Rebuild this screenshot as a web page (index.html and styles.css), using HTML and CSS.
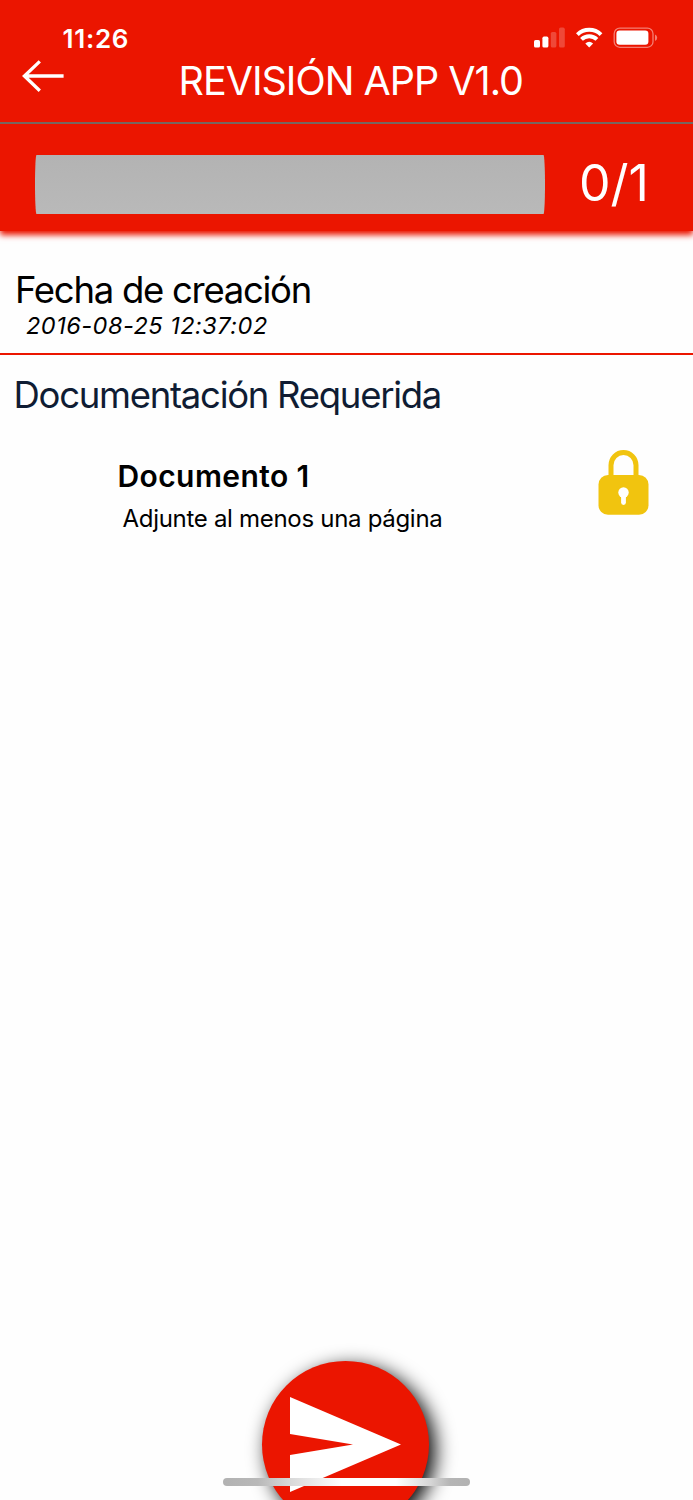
FILE: index.html
```html
<!DOCTYPE html>
<html lang="es">
<head>
    <meta charset="utf-8">
    <title>Revisión App</title>
    <link rel="stylesheet" href="styles.css">
</head>
<body>
    <div class="screen">
        <header class="header">
            <div class="status">
                <span class="time">11:26</span>
                <svg class="status-icons" width="124" height="22" viewBox="0 0 124 22" fill="#fff">
                    <rect x="0" y="13" width="6" height="7.6" rx="1.6"/>
                    <rect x="8.4" y="9.6" width="6" height="11" rx="1.6"/>
                    <rect x="16.8" y="5" width="5.6" height="15.6" rx="1.6" opacity=".22"/>
                    <rect x="25" y="0.6" width="5.8" height="20" rx="1.6" opacity=".22"/>
                    <g fill="none" stroke="#fff" stroke-width="4">
                        <path d="M43.4 7.6A17 17 0 0 1 67 7.6"/>
                        <path d="M47.5 12.4A11 11 0 0 1 62.9 12.4"/>
                    </g>
                    <path d="M51.3 16.4A6 6 0 0 1 59.1 16.4L55.2 20.4Z"/>
                    <rect x="80.2" y="1.1" width="38.8" height="19.2" rx="5.6" fill="none" stroke="#fff" stroke-width="1.3" opacity=".45"/>
                    <rect x="82.4" y="3.6" width="32" height="14.2" rx="3.2"/>
                    <path d="M121 7.4Q123.2 8.4 123.2 10.7T121 14Z" opacity=".45"/>
                </svg>
            </div>
            <div class="navbar">
                <svg class="back" width="44" height="34" viewBox="0 0 44 34" fill="none" stroke="#fff" stroke-width="3.3">
                    <path d="M18.8 2.4L3.4 17L18.8 31.8M2.8 17H42.6"/>
                </svg>
                <h1>REVISIÓN APP V1.0</h1>
            </div>
            <div class="progress">
                <div class="bar"></div>
                <span class="count">0/1</span>
            </div>
        </header>

        <section class="created">
            <h2>Fecha de creación</h2>
            <p class="date">2016-08-25 12:37:02</p>
        </section>

        <section class="required">
            <h2>Documentación Requerida</h2>
            <div class="document">
                <div class="document-text">
                    <h3>Documento 1</h3>
                    <p>Adjunte al menos una página</p>
                </div>
                <svg class="lock" width="51" height="65" viewBox="-0.5 0 51 65">
                    <path d="M12.5 28V15.2a12.5 12.7 0 0 1 25 0V28" fill="none" stroke="#f1c40f" stroke-width="5"/>
                    <rect x="0" y="25" width="50" height="39.7" rx="9.5" fill="#f1c40f"/>
                    <circle cx="25" cy="42.5" r="5.2" fill="#fff"/>
                    <path d="M25 44V52.5" stroke="#fff" stroke-width="4.8" stroke-linecap="round"/>
                </svg>
            </div>
        </section>

        <button class="send" aria-label="Enviar">
            <svg width="111" height="96" viewBox="0 0 111 96" fill="#fff">
                <path d="M0 0L111 47.5L0 95V58L63 47.5L0 37Z"/>
            </svg>
        </button>
        <div class="home-indicator"></div>
    </div>
</body>
</html>
```
FILE: styles.css
```css
* {
    box-sizing: border-box;
}
body {
    margin: 0;
    font-family: Inter, "Liberation Sans", sans-serif;
    background-color: #fefefe;
    color: #000;
}
h1, h2, h3, p {
    margin: 0;
    font-weight: 400;
    white-space: nowrap;
}
.screen {
    position: relative;
    height: 1500px;
    overflow: hidden;
}
.header {
    height: 231px;
    background-color: #eb1500;
    color: #fff;
    box-shadow: 0 4px 6px #eb1500;
}
.status {
    display: flex;
    justify-content: space-between;
    height: 58px;
    padding: 27px 35.5px 0 62.5px;
}
.time {
    font-size: 26px;
    font-weight: 600;
    letter-spacing: 0.7px;
    line-height: 23px;
}
.navbar {
    display: flex;
    height: 66px;
    padding-left: 21px;
    border-bottom: 2px solid #77665f;
}
.back {
    margin-top: 1px;
}
h1 {
    margin-left: 113.5px;
    font-size: 39.5px;
    letter-spacing: -1px;
    line-height: 47px;
}
.progress {
    display: flex;
    padding: 31px 0 0 35px;
}
.bar {
    width: 510px;
    height: 59px;
    border-radius: 1.5px / 30px;
    background: linear-gradient(#b3b3b3, #b9b9b9);
}
.count {
    margin-left: 34px;
    font-size: 50px;
    line-height: 56px;
}
.created {
    height: 124px;
    padding: 37px 0 0 15px;
    border-bottom: 2px solid #eb1500;
}
h2 {
    font-size: 36.5px;
    letter-spacing: -1.28px;
    line-height: 45px;
}
.date {
    padding-left: 11px;
    font-size: 23.5px;
    font-style: italic;
    letter-spacing: 0.5px;
    line-height: 26px;
}
.required {
    padding: 18px 44px 0 13.5px;
}
.required h2 {
    color: #0f1c33;
}
.document {
    display: flex;
    justify-content: space-between;
    padding: 32px 0 0 104px;
}
.document-text {
    padding-top: 5px;
}
h3 {
    font-size: 30px;
    font-weight: 600;
    letter-spacing: 0.4px;
    line-height: 43px;
}
.document p {
    padding-left: 5px;
    font-size: 24px;
    letter-spacing: -0.3px;
    line-height: 41px;
}
.send {
    position: absolute;
    top: 1361px;
    left: 262px;
    width: 167px;
    height: 167px;
    padding: 0 0 0 28px;
    border: 0;
    border-radius: 50%;
    background-color: #eb1500;
    box-shadow: 6px 6px 20px #000;
}
.send svg {
    display: block;
}
.home-indicator {
    position: absolute;
    top: 1478px;
    left: 223px;
    width: 247px;
    height: 8px;
    border-radius: 4px;
    background: linear-gradient(90deg, #b2b2b2, #b8b8b8 14%, #dadada 28%, #fff 48%, #fff 70%, #d6d6d6 84%, #b5b5b5 92%, #b2b2b2);
}
```
